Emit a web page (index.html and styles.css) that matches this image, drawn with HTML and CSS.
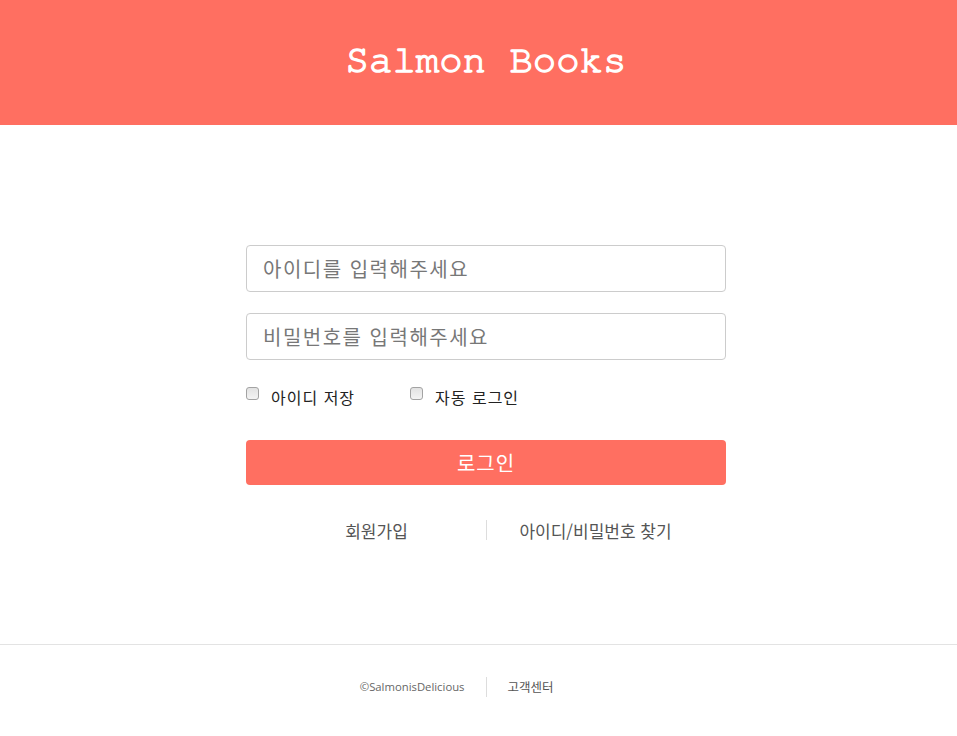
FILE: index.html
```html
<!DOCTYPE html>
<html lang="ko">
<head>
<meta charset="utf-8">
<title>Salmon Books</title>
<link rel="stylesheet" href="styles.css">
</head>
<body>
<header class="site-header">
  <h1 class="logo">Salmon Books</h1>
</header>
<main class="login">
  <form class="login-form">
    <input class="field" type="text" placeholder="아이디를 입력해주세요">
    <input class="field" type="password" placeholder="비밀번호를 입력해주세요">
    <div class="options">
      <label class="option"><input type="checkbox" class="check"><span>아이디 저장</span></label>
      <label class="option"><input type="checkbox" class="check"><span>자동 로그인</span></label>
    </div>
    <button type="button" class="submit">로그인</button>
    <nav class="links">
      <a class="link" href="#">회원가입</a>
      <span class="divider"></span>
      <a class="link" href="#">아이디/비밀번호 찾기</a>
    </nav>
  </form>
</main>
<footer class="site-footer">
  <div class="fside fleft"><span class="copy">©SalmonisDelicious</span></div>
  <span class="fdivider"></span>
  <div class="fside fright"><a class="flink" href="#">고객센터</a></div>
</footer>
</body>
</html>
```
FILE: styles.css
```css
* { box-sizing: border-box; }
html, body { margin: 0; padding: 0; background: #fff; }
body {
  font-family: "Noto Sans CJK KR", "Noto Sans", sans-serif;
  color: #333;
}
.site-header {
  height: 125px;
  background: #ff6f61;
  display: flex;
  align-items: center;
  justify-content: center;
  padding-left: 15px;
}
.logo {
  margin: 0;
  font-family: "Nimbus Mono PS", "Nimbus Mono L", "FreeMono", "Courier", "Liberation Mono", monospace;
  font-weight: normal;
  font-size: 39px;
  color: #fff;
  -webkit-text-stroke: 1.4px #fff;
  transform: translateY(-2px);
}
.login {
  padding: 120px 0 0 15px;
  height: 519px;
  display: flex;
  justify-content: center;
}
.login-form {
  width: 480px;
  display: flex;
  flex-direction: column;
}
.field {
  height: 47px;
  border: 1px solid #ccc;
  border-radius: 4px;
  padding: 0 16px;
  font-family: "Noto Sans CJK KR", sans-serif;
  font-size: 20px;
  letter-spacing: 1.5px;
  color: #333;
  margin-bottom: 21px;
  outline: none;
}
.field::placeholder { color: #777; }
.field + .field { margin-bottom: 0; }
.options {
  display: flex;
  margin-top: 24px;
  height: 25px;
  align-items: center;
}
.option {
  display: flex;
  align-items: center;
  font-size: 16px;
  letter-spacing: 1px;
  color: #222;
  width: 164px;
}
.check {
  appearance: none;
  -webkit-appearance: none;
  margin: 0 12px 0 0;
  width: 13px;
  height: 13px;
  border: 1px solid #a3a3a3;
  border-radius: 3px;
  background: linear-gradient(#e2e2e2, #f4f4f4);
  transform: translateY(-3px);
}
.submit {
  margin-top: 31px;
  height: 45px;
  border: none;
  border-radius: 4px;
  background: #ff6f61;
  color: #fff;
  font-family: "Noto Sans CJK KR", sans-serif;
  font-size: 20px;
  letter-spacing: 1px;
  cursor: pointer;
}
.links {
  margin-top: 34px;
  display: flex;
  align-items: center;
  justify-content: center;
  height: 22px;
}
.link {
  width: 218px;
  text-align: center;
  color: #555;
  font-size: 17px;
  text-decoration: none;
}
.divider {
  width: 1px;
  height: 20px;
  background: #ddd;
}
.site-footer {
  border-top: 1px solid #e3e3e3;
  height: 92px;
  display: flex;
  align-items: center;
  padding: 0 0 8px 15px;
}
.fside { flex: 1; display: flex; }
.fleft { justify-content: flex-end; }
.fright { justify-content: flex-start; }
.copy {
  font-family: "Open Sans", sans-serif;
  font-size: 11.3px;
  color: #666;
}
.fdivider {
  width: 1px;
  height: 20px;
  background: #ddd;
  margin: 0 21px;
}
.flink {
  font-size: 12.5px;
  color: #555;
  text-decoration: none;
}
```
